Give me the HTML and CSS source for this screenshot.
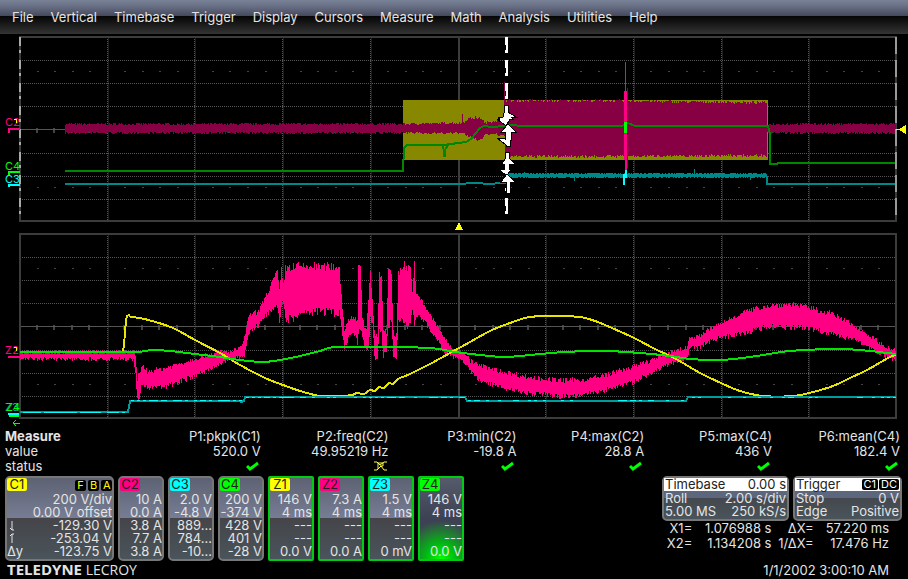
FILE: index.html
```html
<!DOCTYPE html>
<html lang="en">
<head>
    <meta charset="UTF-8">
    <meta name="viewport" content="width=device-width, initial-scale=1.0">
    <title>Teledyne LeCroy</title>
    <link rel="stylesheet" href="styles.css">
</head>
<body>
    <nav class="menu">
        <button type="button">File</button>
        <button type="button">Vertical</button>
        <button type="button">Timebase</button>
        <button type="button">Trigger</button>
        <button type="button">Display</button>
        <button type="button">Cursors</button>
        <button type="button">Measure</button>
        <button type="button">Math</button>
        <button type="button">Analysis</button>
        <button type="button">Utilities</button>
        <button type="button">Help</button>
    </nav>

    <main>
        <!-- full acquisition -->
        <svg class="screen" viewBox="0 34 908 197" role="img" aria-label="Channels C1 to C4">
            <g id="main-grid"></g>
            <g id="main-traces"></g>
            <path d="M20 37V221" stroke="#aaa" stroke-width="2" stroke-dasharray="9 4 3 7"/>
            <path d="M896 37V221" stroke="#999" stroke-width="2" stroke-dasharray="17 6"/>
            <!-- cursors X1 / X2 -->
            <path d="M506.5 37V216" stroke="#fff" stroke-width="3" stroke-dasharray="8 5 3 7"/>
            <path d="M507 37V216" stroke="#fff" stroke-width="2" stroke-dasharray="16 7"/>
            <g fill="#fff" stroke="#000" stroke-width="1">
                <path d="M504 105h4v7l8 5h-5l2 2h-3l-4 7-9-7h3l-2-1 5-1 1-4z"/>
                <path d="M508 124l8 8h-5v8h-1v6h-4v-1l-9-7h3l5 1v-7h-4z"/>
                <path d="M505 152h4v6l6 6h-6v5h2l-4 7-9-7h6v-5h-2l3-5z"/>
                <path d="M507 174l8 8h-5v11h-4v-11h-5z"/>
            </g>
            <path d="M459 222l4 8h-8z" fill="#ff0"/>
            <path d="M896 129h3l7-4v9l-7-4h-3z" fill="#ff0"/>
            <g class="marks">
                <text x="5" y="126" fill="#ff0084">C2</text>
                <path d="M14 119h2v4" fill="none" stroke="#ff0" stroke-width="1"/>
                <path d="M9 133v-4h11" fill="none" stroke="#ff0084" stroke-width="2"/>
                <text x="5" y="170" fill="#0f0">C4</text>
                <path d="M9 175v-3h11" fill="none" stroke="#0f0" stroke-width="2"/>
                <text x="5" y="183" fill="#0ff">C3</text>
                <path d="M9 187v-2h11" fill="none" stroke="#0ff" stroke-width="2"/>
            </g>
        </svg>

        <!-- zoom -->
        <svg class="screen" viewBox="0 231 908 197" role="img" aria-label="Zooms Z1 to Z4">
            <g id="zoom-grid"></g>
            <g id="zoom-traces"></g>
            <g class="marks">
                <text x="5" y="354" fill="#ff0084">Z2</text>
                <path d="M14 347h2v4" fill="none" stroke="#ff0" stroke-width="1"/>
                <path d="M8 357h12" stroke="#ff0084" stroke-width="2"/>
                <text x="5" y="411" fill="#00b0b0">Z3</text>
                <text x="6" y="411" fill="#0f0">Z4</text>
                <path d="M8 414h11" stroke="#0ff" stroke-width="2"/>
                <path d="M9 416h10" stroke="#0f0" stroke-width="2"/>
            </g>
            <path d="M20 423h-7M16 420l-3 3 3 3" fill="none" stroke="#0f0" stroke-width="1"/>
        </svg>

        <table class="measure">
            <tr>
                <th scope="row">Measure</th>
                <td>P1:pkpk(C1)</td>
                <td>P2:freq(C2)</td>
                <td>P3:min(C2)</td>
                <td>P4:max(C2)</td>
                <td>P5:max(C4)</td>
                <td>P6:mean(C4)</td>
            </tr>
            <tr>
                <th scope="row" class="plain">value</th>
                <td>520.0 V</td>
                <td>49.95219 Hz</td>
                <td>-19.8 A</td>
                <td>28.8 A</td>
                <td>436 V</td>
                <td>182.4 V</td>
            </tr>
            <tr>
                <th scope="row" class="plain">status</th>
                <td><svg class="ok" viewBox="0 0 13 10"><path d="M1 5l3 3 8-6"/></svg></td>
                <td><svg class="warn" viewBox="0 0 13 10"><path d="M0 1h3l3 3 4-3h3M0 9h3l4-4 3 4h3M4 8V2h5v3H6"/></svg></td>
                <td><svg class="ok" viewBox="0 0 13 10"><path d="M1 5l3 3 8-6"/></svg></td>
                <td><svg class="ok" viewBox="0 0 13 10"><path d="M1 5l3 3 8-6"/></svg></td>
                <td><svg class="ok" viewBox="0 0 13 10"><path d="M1 5l3 3 8-6"/></svg></td>
                <td><svg class="ok" viewBox="0 0 13 10"><path d="M1 5l3 3 8-6"/></svg></td>
            </tr>
        </table>

        <div class="panel">
            <div class="channels">
                <button type="button" class="box wide">
                    <span class="head"><b class="tag yellow">C1</b><span class="flags"><i>F</i><i>B</i><i>A</i></span></span>
                    <span class="row">200 V/div</span>
                    <span class="row">0.00 V offset</span>
                    <span class="row"><svg class="level" viewBox="0 0 7 11"><path d="M3 1v9M1 8l2 2h2"/></svg>-129.30 V</span>
                    <span class="row"><svg class="level" viewBox="0 0 7 11"><path d="M3 10V1M1 3l2-2h2"/></svg>-253.04 V</span>
                    <span class="row"><em>Δy</em>-123.75 V</span>
                </button>
                <button type="button" class="box">
                    <span class="head"><b class="tag pink">C2</b></span>
                    <span class="row">10 A</span>
                    <span class="row">0.0 A</span>
                    <span class="row">3.8 A</span>
                    <span class="row">7.7 A</span>
                    <span class="row">3.8 A</span>
                </button>
                <button type="button" class="box">
                    <span class="head"><b class="tag cyan">C3</b></span>
                    <span class="row">2.0 V</span>
                    <span class="row">-4.8 V</span>
                    <span class="row">889...</span>
                    <span class="row">784...</span>
                    <span class="row">-10...</span>
                </button>
                <button type="button" class="box">
                    <span class="head"><b class="tag green">C4</b></span>
                    <span class="row">200 V</span>
                    <span class="row">-374 V</span>
                    <span class="row">428 V</span>
                    <span class="row">401 V</span>
                    <span class="row">-28 V</span>
                </button>
                <button type="button" class="box zoom">
                    <span class="head"><b class="tag yellow">Z1</b></span>
                    <span class="row">146 V</span>
                    <span class="row">4 ms</span>
                    <span class="row">---</span>
                    <span class="row">---</span>
                    <span class="row">0.0 V</span>
                </button>
                <button type="button" class="box zoom">
                    <span class="head"><b class="tag pink">Z2</b></span>
                    <span class="row">7.3 A</span>
                    <span class="row">4 ms</span>
                    <span class="row">---</span>
                    <span class="row">---</span>
                    <span class="row">0.0 A</span>
                </button>
                <button type="button" class="box zoom">
                    <span class="head"><b class="tag cyan">Z3</b></span>
                    <span class="row">1.5 V</span>
                    <span class="row">4 ms</span>
                    <span class="row">---</span>
                    <span class="row">---</span>
                    <span class="row">0 mV</span>
                </button>
                <button type="button" class="box zoom active">
                    <span class="head"><b class="tag green">Z4</b></span>
                    <span class="row">146 V</span>
                    <span class="row">4 ms</span>
                    <span class="row">---</span>
                    <span class="row">---</span>
                    <span class="row">0.0 V</span>
                </button>
            </div>

            <div class="side">
                <div class="setup">
                    <button type="button" class="info timebase">
                        <span class="title"><span>Timebase</span><span>0.00 s</span></span>
                        <span class="pair"><span>Roll</span><span>2.00 s/div</span></span>
                        <span class="pair"><span>5.00 MS</span><span>250 kS/s</span></span>
                    </button>
                    <button type="button" class="info trigger">
                        <span class="title"><span>Trigger</span><span class="flags"><i>C1</i><i>DC</i></span></span>
                        <span class="pair"><span>Stop</span><span>0 V</span></span>
                        <span class="pair"><span>Edge</span><span>Positive</span></span>
                    </button>
                </div>
                <table class="cursors">
                    <tr>
                        <th scope="row">X1=</th><td>1.076988 s</td>
                        <th scope="row">ΔX=</th><td>57.220 ms</td>
                    </tr>
                    <tr>
                        <th scope="row">X2=</th><td>1.134208 s</td>
                        <th scope="row">1/ΔX=</th><td>17.476 Hz</td>
                    </tr>
                </table>
            </div>
        </div>
    </main>

    <footer>
        <div class="brand"><strong>TELEDYNE</strong> LECROY</div>
        <time>1/1/2002 3:00:10 AM</time>
    </footer>

    <script src="scope.js"></script>
</body>
</html>
```
FILE: styles.css
```css
* {
    margin: 0;
    padding: 0;
    box-sizing: border-box;
}
body {
    background-color: #000;
    color: #e4e4e4;
    font-family: Inter, 'Liberation Sans', sans-serif;
    font-size: 13px;
    line-height: 15px;
}
button {
    border: none;
    background: none;
    color: inherit;
    font: inherit;
    cursor: pointer;
}
i, em {
    font-style: normal;
}
.menu {
    display: flex;
    gap: 17px;
    height: 34px;
    padding: 0 12px;
    align-items: center;
    background: linear-gradient(#788296 0, #6a7186 6px, #44485c 16px, #050505 16px, #141414 22px, #343434 34px);
}
.screen {
    display: block;
    width: 100%;
    shape-rendering: crispEdges;
}
.marks text {
    font-size: 11px;
}
.measure {
    width: 100%;
    margin: 1px 0 2px;
    padding: 0 8px 0 5px;
    table-layout: fixed;
    border-spacing: 0;
}
.measure th {
    text-align: left;
    font-weight: bold;
}
.measure th.plain {
    font-weight: normal;
}
.measure td {
    text-align: right;
    white-space: nowrap;
}
.measure tr {
    height: 15px;
}
.ok, .warn {
    display: inline-block;
    width: 13px;
    height: 10px;
    fill: none;
}
.ok {
    stroke: #0f0;
    stroke-width: 3;
    margin-right: 2px;
}
.warn {
    stroke: #ff4;
    stroke-width: 1;
    margin-right: 2px;
}
.panel {
    display: flex;
    justify-content: space-between;
    padding: 0 6px 0 5px;
}
.channels {
    display: flex;
    gap: 4px;
}
.box {
    display: grid;
    grid-template-rows: 15px repeat(5, 1fr);
    width: 46px;
    height: 85px;
    padding: 0 0 1px;
    border: 2px solid #777;
    border-radius: 5px;
    background: linear-gradient(#5d6273, #777d94 50%, #45454a 50%, #49545a);
}
.box.wide {
    width: 109px;
}
.box.zoom {
    border-color: #0c1;
    border-radius: 2px;
}
.box.active {
    background: radial-gradient(circle at 50% 100%, #0f0 0, #0b1 15px, transparent 38px), linear-gradient(#555b6b, #3c4254 50%, #40484c);
}
.head {
    display: flex;
    justify-content: space-between;
}
.tag {
    width: 20px;
    height: 13px;
    border-radius: 2px;
    color: #222;
    font-weight: normal;
    line-height: 13px;
}
.yellow { background-color: #ff0; }
.pink { background-color: #ff0084; }
.cyan { background-color: #0ff; }
.green { background-color: #0f0; }
.flags {
    display: flex;
    gap: 2px;
    align-items: center;
}
.flags i {
    padding: 0 2px;
    border-radius: 2px;
    background-color: #000;
    color: #ff0;
    font-size: 11px;
    line-height: 11px;
}
.wide .flags i {
    width: 11px;
}
.row {
    display: flex;
    justify-content: flex-end;
    align-items: center;
    line-height: 13px;
    white-space: nowrap;
}
.level {
    width: 7px;
    height: 11px;
    margin: 0 auto 0 2px;
    fill: none;
    stroke: #e4e4e4;
    stroke-width: 1;
}
.row em {
    margin-right: auto;
}
.setup {
    display: flex;
    gap: 4px;
}
.info {
    border: 2px solid #777;
    border-radius: 5px;
    padding-bottom: 1px;
    background: linear-gradient(#5c667c 0, #5c667c 20px, #44484e 20px, #4a545b);
}
.timebase {
    width: 127px;
}
.trigger {
    width: 109px;
}
.title, .pair {
    display: flex;
    justify-content: space-between;
    padding: 0 1px;
    line-height: 13px;
    white-space: nowrap;
}
.title {
    margin-bottom: 1px;
    background-color: #fff;
    color: #222;
}
.title .flags {
    gap: 1px;
}
.title .flags i {
    color: #fff;
}
.cursors {
    width: 100%;
    padding: 0 13px 0 0;
    border-spacing: 0;
}
.cursors th {
    font-weight: normal;
    text-align: right;
}
.cursors td {
    text-align: right;
}
footer {
    display: flex;
    justify-content: space-between;
    padding: 0 19px 0 7px;
    line-height: 18px;
}
.brand {
    font-family: 'Open Sans', sans-serif;
    font-size: 14px;
    line-height: 16px;
}
.brand strong {
    font-size: 15px;
}
```
FILE: scope.js
```js
const NS = 'http://www.w3.org/2000/svg';
const PINK = '#ff0084';

// repeatable noise, so the traces look the same on every load
let seed = 7;
function noise() {
    seed = (seed * 16807) % 2147483647;
    return seed / 2147483647;
}

function addPath(id, d, color, width, dash) {
    const path = document.createElementNS(NS, 'path');
    path.setAttribute('d', d);
    path.setAttribute('stroke', color);
    path.setAttribute('stroke-width', width || 1);
    path.setAttribute('fill', 'none');
    if (dash) path.setAttribute('stroke-dasharray', dash);
    document.getElementById(id).appendChild(path);
}

// 10 x 8 divisions
function drawGrid(id, top) {
    const left = 20, right = 896, bottom = top + 184;
    const mid = top + 92.5;
    for (let i = 1; i < 10; i++) {
        if (i === 5) continue;
        const x = Math.round(left + i * 87.7) - 0.5;
        addPath(id, `M${x} ${top}V${bottom}`, '#555', 1, '1 1');
        addPath(id, `M${x + 1} ${top}V${bottom}`, '#1e1e1e', 1);
    }
    for (let i = 1; i < 8; i++) {
        if (i === 4) continue;
        const y = Math.round(top + i * 23.1) + 0.5;
        addPath(id, `M${left} ${y}H${right}`, '#555', 1, '1 1');
    }
    for (let i = 1; i < 50; i++) {
        if (i % 5 === 0) continue;
        const x = Math.round(left + i * 17.54) - 1;
        addPath(id, `M${x} ${top + 34.5}h2M${x} ${top + 150.5}h2`, '#444', 1);
        addPath(id, `M${x} ${mid - 2}v5`, '#444', 2);
    }
    addPath(id, `M${left} ${mid}H${right}`, '#555', 1);
    addPath(id, `M459 ${top}V${bottom}`, '#3c3c3c', 2);
    addPath(id, `M${left} ${top}H${right}V${bottom}H${left}Z`, '#3c3c3c', 2);
}

// filled noisy band, points are [x, upper, lower]
function drawBand(id, points, color, jitter) {
    let d = '';
    for (let i = 0; i < points.length - 1; i++) {
        const [x1, u1, l1] = points[i];
        const [x2, u2, l2] = points[i + 1];
        for (let x = x1; x < x2; x++) {
            const t = (x - x1) / (x2 - x1);
            const up = u1 + (u2 - u1) * t;
            const low = l1 + (l2 - l1) * t;
            // wider parts of the band are rougher
            const amount = jitter + (low - up) * jitter * 0.04;
            d += `M${x + 0.5} ${Math.round(up - noise() * amount)}V${Math.round(low + noise() * amount)}`;
        }
    }
    addPath(id, d, color, 1);
}

// smooth curve through the points, drawn as a thin line
function drawCurve(id, points, color, width) {
    let d = `M${points[0][0]} ${points[0][1]}`;
    for (let i = 0; i < points.length - 1; i++) {
        const a = points[i - 1] || points[i], b = points[i];
        const c = points[i + 1], e = points[i + 2] || c;
        d += `C${b[0] + (c[0] - a[0]) / 6} ${b[1] + (c[1] - a[1]) / 6}`;
        d += ` ${c[0] - (e[0] - b[0]) / 6} ${c[1] - (e[1] - b[1]) / 6} ${c[0]} ${c[1]}`;
    }
    addPath(id, d, color, width || 1);
}

function drawLine(id, points, color, width) {
    addPath(id, 'M' + points.map(p => p.join(' ')).join('L'), color, width || 1);
}

function speckle(id, x1, x2, y, color, chance) {
    let d = '';
    for (let x = x1; x < x2; x += 3) {
        if (noise() < chance) d += `M${x} ${y}h3`;
    }
    addPath(id, d, color, 1);
}

function drawMain() {
    const id = 'main-traces';
    drawGrid('main-grid', 37);

    // C1
    addPath(id, 'M403 129.5H768', '#878700', 60);

    // C2
    drawBand(id, [[65, 125, 132], [403, 125, 132], [462, 124, 132], [468, 120, 135], [475, 119, 138], [482, 120, 138], [484, 124, 133], [494, 122, 133], [505, 121, 135]], '#870044', 1.6);
    drawBand(id, [[505, 102, 155], [600, 102, 155], [767, 104, 154]], '#870044', 0.9);
    drawBand(id, [[767, 125, 132], [896, 125, 132]], '#870044', 1.6);
    addPath(id, 'M462.5 114v12M504.5 82v40', '#870044', 1);
    addPath(id, 'M627.5 88v80', '#870044', 1);
    addPath(id, 'M625 62v108', PINK, 1);
    addPath(id, 'M625.5 91v69', PINK, 3);
    addPath(id, 'M626.5 95v75', PINK, 1);

    // C4
    drawLine(id, [[65, 171], [403, 171], [404, 148], [407, 145], [443, 145], [466, 142], [471, 139], [480, 128], [484, 126], [492, 127], [505, 126], [514, 125], [520, 126], [622, 126], [628, 123], [635, 126], [768, 126], [770, 134], [770, 164], [776, 164], [779, 163], [896, 163]], '#008700', 2);
    addPath(id, 'M442 145h6l-3 5v6h-1v-6z', '#008700', 2);
    addPath(id, 'M625.5 122v11', '#0f0', 3);

    // C3
    drawLine(id, [[65, 184], [464, 184], [468, 183], [481, 183], [485, 184], [505, 183], [506, 176]], '#008787', 2);
    drawBand(id, [[506, 174, 177], [767, 174, 177]], '#008787', 1.3);
    drawLine(id, [[767, 176], [767, 184], [896, 184]], '#008787', 2);
    addPath(id, 'M574.5 176v5M694.5 169v6M750.5 175v5M524.5 172v4', '#008787', 1);
    addPath(id, 'M623.5 174v11M625.5 170v8', '#0ff', 2);
}

function drawZoom() {
    const id = 'zoom-traces';
    drawGrid('zoom-grid', 234);

    // Z2
    drawBand(id, [
        [20, 354, 357], [133, 354, 357], [135, 360, 372], [137, 384, 398], [139, 375, 394], [142, 368, 380],
        [147, 374, 386], [165, 371, 384], [195, 361, 373], [220, 354, 362], [230, 354, 357], [240, 350, 356],
        [244, 340, 352], [248, 321, 335], [250, 317, 327], [258, 314, 323], [264, 302, 315], [272, 285, 307],
        [277, 276, 304], [279, 295, 320], [281, 274, 300], [283, 288, 302], [285, 273, 315], [300, 271, 313],
        [302, 271, 307], [339, 271, 308], [341, 300, 325], [344, 332, 346], [349, 321, 332], [353, 319, 330],
        [357, 322, 340], [358, 270, 325], [360, 274, 320], [362, 322, 335], [366, 334, 348], [368, 300, 345],
        [370, 278, 316], [372, 300, 320], [374, 335, 355], [377, 340, 354], [379, 274, 320], [381, 285, 325],
        [383, 332, 353], [386, 335, 350], [388, 272, 318], [391, 277, 320], [393, 335, 353], [396, 338, 353],
        [398, 278, 317], [402, 270, 318], [410, 274, 322], [412, 292, 305], [414, 271, 322], [416, 298, 312],
        [421, 303, 315], [432, 321, 331], [445, 341, 350], [451, 351, 354], [456, 352, 357], [464, 355, 360],
        [470, 363, 370], [480, 368, 378], [500, 374, 385], [530, 380, 391], [560, 383, 394], [585, 382, 392],
        [600, 379, 389], [634, 369, 379], [660, 359, 366], [670, 354, 361], [686, 350, 356], [689, 341, 349],
        [691, 339, 345], [697, 339, 346], [710, 331, 339], [721, 326, 335], [740, 316, 331], [765, 309, 324],
        [793, 307, 324], [810, 311, 326], [830, 316, 331], [850, 326, 336], [870, 338, 346], [885, 349, 354],
        [896, 353, 358]
    ], PINK, 3.6);

    // Z1
    drawLine(id, [[123, 352], [124, 345], [126, 320], [127, 316], [129, 315], [130, 317]], '#e6e600', 2);
    drawCurve(id, [[130, 317], [140, 318], [152, 321], [173, 328], [195, 340], [220, 353], [240, 365], [265, 378], [283, 385], [300, 391], [320, 396], [340, 396], [352, 395], [357, 393], [364, 394], [370, 390], [375, 391], [379, 387], [384, 388], [389, 383], [393, 384], [398, 379], [410, 374], [430, 364], [450, 353], [470, 342], [490, 331], [510, 323], [530, 317], [555, 316], [580, 317], [595, 321], [612, 328], [634, 338], [655, 349], [676, 359], [700, 373], [721, 383], [740, 391], [763, 396], [793, 396], [813, 392], [833, 386], [850, 378], [867, 370], [890, 357], [896, 355]], '#e6e600', 2);

    // Z4
    drawCurve(id, [[20, 352], [130, 352], [152, 350], [170, 351], [195, 354], [220, 357], [240, 360], [262, 362], [280, 360], [300, 356], [320, 351], [335, 347], [380, 347], [430, 348], [455, 352], [480, 355], [505, 357], [530, 355], [565, 352], [605, 351], [640, 353], [670, 356], [690, 359], [720, 360], [750, 357], [790, 351], [835, 349], [860, 350], [896, 354]], '#00e600', 2);

    // Z3
    drawLine(id, [[20, 412], [128, 412], [130, 401], [239, 401], [241, 402], [244, 401], [245, 397], [465, 397], [467, 401], [686, 401], [688, 397], [896, 397]], '#009c9c', 2);
    speckle(id, 20, 126, 412.5, '#0ff', 0.9);
    speckle(id, 131, 240, 400.5, '#0ff', 0.6);
    speckle(id, 246, 464, 397.5, '#0ff', 0.4);
    speckle(id, 468, 686, 400.5, '#0ff', 0.2);
    speckle(id, 689, 894, 397.5, '#0ff', 0.4);
}

drawMain();
drawZoom();
```
